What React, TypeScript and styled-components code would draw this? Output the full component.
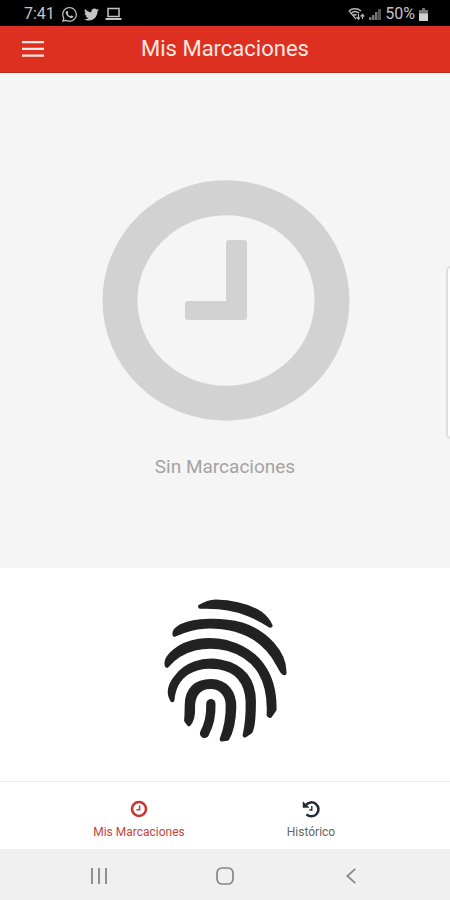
import React from "react";
import styled, { createGlobalStyle } from "styled-components";
import { FaWhatsapp, FaTwitter } from "react-icons/fa";

const GlobalStyle = createGlobalStyle`
  * { box-sizing: border-box; }
  body { margin: 0; background: #fff; font-family: Roboto, "Liberation Sans", sans-serif; }
  button { border: 0; padding: 0; background: none; font: inherit; color: inherit; cursor: pointer; }
  svg { display: block; }
`;

const Screen = styled.div`
  position: relative;
  display: flex;
  flex-direction: column;
  min-height: 100vh;
  overflow: hidden;
`;

const StatusBar = styled.div`
  display: flex;
  align-items: center;
  justify-content: space-between;
  height: 26px;
  padding: 2px 22px 0 24px;
  background: #000;
  color: #c4c4c4;
  font-size: 16px;
  line-height: 24px;
`;

const StatusGroup = styled.div<{ $gap: number }>`
  display: flex;
  align-items: center;
  gap: ${(p) => p.$gap}px;
`;

const Header = styled.header`
  display: grid;
  grid-template-columns: 66px 1fr 66px;
  align-items: center;
  height: 47px;
  background: #de3021;
  border-bottom: 1px solid #bd2a1e;
  color: #fbe9e4;
`;

const MenuButton = styled.button`
  display: flex;
  justify-content: center;
  padding: 12px 0;
`;

const Title = styled.h1`
  margin: 0;
  text-align: center;
  font-size: 22px;
  line-height: 28px;
  font-weight: 400;
`;

const EmptyState = styled.main`
  flex: 1;
  display: flex;
  flex-direction: column;
  align-items: center;
  gap: 34px;
  padding-top: 107px;
  background: #f5f5f5;
`;

const EmptyText = styled.p`
  margin: 0;
  color: #a3a3a3;
  font-size: 19px;
  line-height: 24px;
`;

const EdgePanel = styled.div`
  position: absolute;
  top: 266px;
  right: -8px;
  width: 12px;
  height: 173px;
  border: 2px solid #dedede;
  border-radius: 5px;
  background: #fff;
`;

const ScanArea = styled.section`
  display: flex;
  justify-content: center;
  padding: 31px 0 38px;
  background: #fff;
`;

const Tabs = styled.nav`
  display: flex;
  justify-content: center;
  height: 68px;
  padding: 0 53px;
  border-top: 1px solid #ebebeb;
  background: #fff;
`;

const Tab = styled.button<{ $active?: boolean }>`
  flex: 1;
  display: flex;
  flex-direction: column;
  align-items: center;
  gap: 6px;
  padding-top: 18px;
  color: ${(p) => (p.$active ? "#c4453d" : "#656565")};
  font-size: 12px;
  line-height: 16px;
`;

const SystemNav = styled.div`
  display: grid;
  grid-template-columns: repeat(3, 126px);
  justify-content: center;
  height: 51px;
  background: #f0f0f0;
  color: #878787;
`;

const NavButton = styled.button`
  display: flex;
  align-items: center;
  justify-content: center;
  padding-top: 2px;
`;

const LaptopIcon = () => (
  <svg width="17" height="14" viewBox="0 0 17 14" fill="none" stroke="currentColor" strokeWidth="1.5">
    <rect x="3" y="1.500" width="11" height="8" />
    <path d="M.5 12h16" strokeWidth="2" />
  </svg>
);

const WifiIcon = () => (
  <svg width="17" height="14" viewBox="0 0 17 14" fill="none" stroke="#b5b5b5" strokeWidth="1.500">
    <path d="M1 4C4 1 10 1 13 4M3 6.300c2.500-2.300 5.500-2.300 8 0M5 8.600c1.200-1.200 2.500-1.200 3.500-.3" />
    <path d="M1 4 8 12" strokeWidth="1.200" />
    <path d="M10.500 7v5m-2-2 2 2.400 1.500-2M14.500 12V7.500m-1.800 2 1.800-2 1.800 2" strokeWidth="1.200" />
  </svg>
);

const SignalIcon = () => (
  <svg width="12" height="13" viewBox="0 0 12 13" fill="#757575">
    <path d="M0 9h2.500v3H0zM3 7h2.500v5H3zM6 4h2.500v8H6z" />
    <path d="M9 1h3v11H9z" fill="#555" />
  </svg>
);

const BatteryIcon = () => (
  <svg width="9" height="13" viewBox="0 0 9 13">
    <path d="M3 0h3v2h3v4H0V2h3z" fill="#777" />
    <path d="M0 5.500h9V13H0z" fill="#d0d0d0" />
  </svg>
);

const MenuIcon = () => (
  <svg width="22" height="16" viewBox="0 0 22 16" fill="currentColor">
    <path d="M0 0h22v2.300H0zM0 6.700h22V9H0zM0 13.500h22v2.300H0z" />
  </svg>
);

const LargeClock = () => (
  <svg width="250" height="241" viewBox="0 0 250 241" aria-hidden="true">
    <ellipse cx="126" cy="120.500" rx="106" ry="102.700" fill="none" stroke="#d2d2d2" strokeWidth="35" />
    <path
      d="M129 60h15q3 0 3 3v74q0 3-3 3H88q-3 0-3-3v-13q0-3 3-3h38V63q0-3 3-3z"
      fill="#d2d2d2"
    />
  </svg>
);

const Fingerprint = () => (
  <svg
    width="125"
    height="144"
    viewBox="54 42 374 433"
    fill="#222"
    stroke="#222"
    strokeWidth="13"
    strokeLinejoin="round"
    strokeLinecap="round"
  >
    <path d="M165 65Q187 51 212 50C270 52 315 66 345 85Q368 103 376 122C325 89 275 70 220 66Q190 64 165 65Z" />
    <path d="M88 149C86 138 95 131 108 124C150 104 230 103 290 119C363 142 420 205 418 265C411 264 408 253 401 241C374 188 334 152 271 134C205 119 150 120 88 149Z" />
    <path d="M65 242C60 226 71 213 88 199C130 165 190 160 245 172C333 195 390 262 388 374L375 393L371 391C377 288 337 216 247 191C180 176 112 188 65 242Z" />
    <path d="M81 346C68 325 73 302 93 277C120 240 170 221 225 230C297 243 326 290 326 350C326 400 324 430 315 442L299 452C306 420 309 390 308 350C305 290 277 256 220 247C150 237 88 266 81 346Z" />
    <path d="M123 407C125 392 124 380 125 358C126 315 151 289 197 289C244 289 268 325 267 368C266 405 259 440 246 462L230 464C243 430 249 395 248 360C247 329 227 306 196 306C158 306 142 335 143 370C144 395 137 411 131 418Z" />
    <path d="M197 357C198 390 192 420 178 446" fill="none" strokeWidth="28" />
  </svg>
);

const ClockIcon = () => (
  <svg width="18" height="18" viewBox="0 0 18 18" fill="none" stroke="#c93630">
    <circle cx="9" cy="9" r="7" strokeWidth="2.600" />
    <path d="M9.600 5.500v4.300H6.500" strokeWidth="1.500" />
  </svg>
);

const HistoryIcon = () => (
  <svg width="18" height="18" viewBox="0 0 18 18" fill="none" stroke="#202a35">
    <path d="M3.800 5.200A7 7 0 1 1 4.500 14.300" strokeWidth="2.500" />
    <path d="M1 1.800v5.700h6z" fill="#202a35" strokeWidth=".5" />
    <path d="M9.800 6v4H7.300" strokeWidth="1.400" />
  </svg>
);

const RecentsIcon = () => (
  <svg width="16" height="16" viewBox="0 0 16 16" stroke="currentColor" strokeWidth="1.800">
    <path d="M1 0v16M8 0v16M15 0v16" />
  </svg>
);

const HomeIcon = () => (
  <svg width="18" height="18" viewBox="0 0 18 18" fill="none" stroke="currentColor" strokeWidth="1.700">
    <rect x="1" y="1" width="16" height="16" rx="5" />
  </svg>
);

const BackIcon = () => (
  <svg width="10" height="16" viewBox="0 0 10 16" fill="none" stroke="currentColor" strokeWidth="1.700">
    <path d="M9.300 .8 1.300 8l8 7.200" />
  </svg>
);

export default function App() {
  return (
    <>
      <GlobalStyle />
      <Screen>
        <StatusBar>
          <StatusGroup $gap={6}>
            <span>7:41</span>
            <FaWhatsapp size={17} />
            <FaTwitter size={15} />
            <LaptopIcon />
          </StatusGroup>
          <StatusGroup $gap={4}>
            <WifiIcon />
            <SignalIcon />
            <span>50%</span>
            <BatteryIcon />
          </StatusGroup>
        </StatusBar>
        <Header>
          <MenuButton aria-label="Menú">
            <MenuIcon />
          </MenuButton>
          <Title>Mis Marcaciones</Title>
        </Header>
        <EmptyState>
          <LargeClock />
          <EmptyText>Sin Marcaciones</EmptyText>
        </EmptyState>
        <ScanArea>
          <button aria-label="Marcar con huella">
            <Fingerprint />
          </button>
        </ScanArea>
        <Tabs>
          <Tab $active aria-current="page">
            <ClockIcon />
            <span>Mis Marcaciones</span>
          </Tab>
          <Tab>
            <HistoryIcon />
            <span>Histórico</span>
          </Tab>
        </Tabs>
        <SystemNav>
          <NavButton aria-label="Recientes">
            <RecentsIcon />
          </NavButton>
          <NavButton aria-label="Inicio">
            <HomeIcon />
          </NavButton>
          <NavButton aria-label="Atrás">
            <BackIcon />
          </NavButton>
        </SystemNav>
        <EdgePanel />
      </Screen>
    </>
  );
}
